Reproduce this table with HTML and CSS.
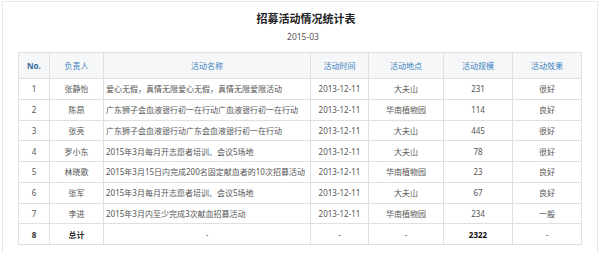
FILE: index.html
```html
<!DOCTYPE html>
<html lang="zh-CN">
<head>
<meta charset="utf-8">
<title>招募活动情况统计表</title>
<link rel="stylesheet" href="styles.css">
</head>
<body>
<div class="panel">
  <h1 class="title">招募活动情况统计表</h1>
  <div class="date">2015-03</div>
  <table class="stats">
    <colgroup>
      <col class="c-no"><col class="c-person"><col class="c-name"><col class="c-time"><col class="c-place"><col class="c-scale"><col class="c-effect">
    </colgroup>
    <thead>
      <tr><th class="no">No.</th><th>负责人</th><th>活动名称</th><th>活动时间</th><th>活动地点</th><th>活动规模</th><th>活动效果</th></tr>
    </thead>
    <tbody>
      <tr><td>1</td><td>张静怡</td><td class="left">爱心无假，真情无限爱心无假，真情无限爱限活动</td><td>2013-12-11</td><td>大夫山</td><td>231</td><td>很好</td></tr>
      <tr><td>2</td><td>陈昂</td><td class="left">广东狮子会血液银行初一在行动广血液银行初一在行动</td><td>2013-12-11</td><td>华南植物园</td><td>114</td><td>良好</td></tr>
      <tr><td>3</td><td>张亮</td><td class="left">广东狮子会血液银行动广东会血液银行初一在行动</td><td>2013-12-11</td><td>大夫山</td><td>445</td><td>很好</td></tr>
      <tr><td>4</td><td>罗小东</td><td class="left">2015年3月每月开志愿者培训、会议5场地</td><td>2013-12-11</td><td>大夫山</td><td>78</td><td>很好</td></tr>
      <tr><td>5</td><td>林晓歌</td><td class="left">2015年3月15日内完成200名固定献血者的10次招募活动</td><td>2013-12-11</td><td>华南植物园</td><td>23</td><td>良好</td></tr>
      <tr><td>6</td><td>张军</td><td class="left">2015年3月每月开志愿者培训、会议5场地</td><td>2013-12-11</td><td>大夫山</td><td>67</td><td>良好</td></tr>
      <tr><td>7</td><td>李进</td><td class="left">2015年3月内至少完成3次献血招募活动</td><td>2013-12-11</td><td>华南植物园</td><td>234</td><td>一般</td></tr>
      <tr class="total"><td class="b">8</td><td class="b">总计</td><td>-</td><td>-</td><td>-</td><td class="b strong">2322</td><td>-</td></tr>
    </tbody>
  </table>
</div>
</body>
</html>
```

FILE: styles.css
```css
html, body {
  margin: 0;
  padding: 0;
  background: #ffffff;
  overflow: hidden;
}
body {
  font-family: "Noto Sans", "Noto Sans CJK SC", sans-serif;
  color: #555555;
}
.panel {
  margin: 1px 6px 0 2px;
  height: 252px;
  border: 1px solid #e8e8e8;
  border-bottom: none;
  padding: 9px 15px 0 15px;
  box-sizing: border-box;
}
.title {
  margin: 0;
  padding-left: 12px;
  font-size: 11px;
  line-height: 16px;
  font-weight: bold;
  text-align: center;
  color: #222222;
}
.date {
  margin-top: 4px;
  padding-left: 6px;
  font-size: 8.5px;
  line-height: 12px;
  text-align: center;
  color: #555555;
}
.stats {
  margin-top: 9px;
  width: 563px;
  border-collapse: collapse;
  table-layout: fixed;
  font-size: 8px;
}
.c-no { width: 31px; }
.c-person { width: 54px; }
.c-name { width: 207px; }
.c-time { width: 58px; }
.c-place { width: 75px; }
.c-scale { width: 69px; }
.c-effect { width: 69px; }
.stats th, .stats td {
  border: 1px solid #e0e0e0;
  padding: 0 2px;
  text-align: center;
  white-space: nowrap;
  overflow: hidden;
}
.stats th {
  height: 25px;
  background: #f5f7f9;
  color: #3f82c0;
  font-weight: normal;
}
.stats th.no {
  color: #2e6a9f;
  font-weight: bold;
}
.stats td {
  height: 19.75px;
  color: #555555;
}
.stats td.left {
  text-align: left;
}
.stats td.b {
  font-weight: bold;
  color: #333333;
}
.stats td.strong {
  color: #111111;
}
```
